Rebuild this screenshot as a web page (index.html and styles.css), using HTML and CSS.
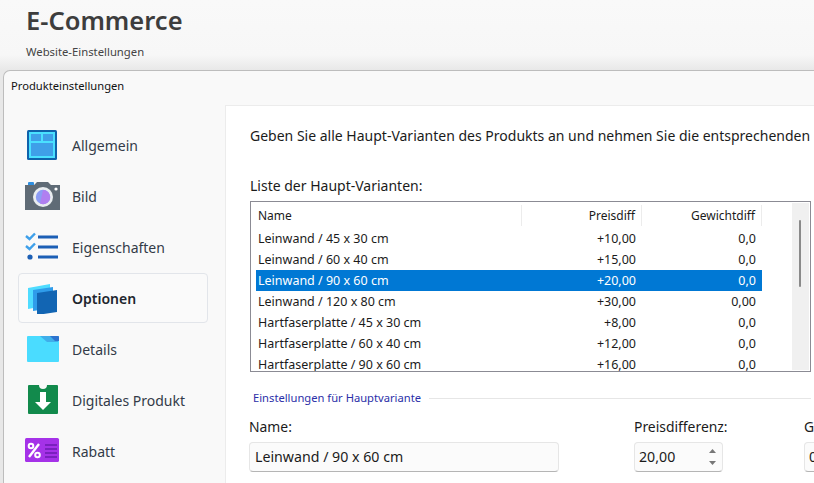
FILE: index.html
```html
<!DOCTYPE html>
<html lang="de">
<head>
<meta charset="utf-8">
<title>Produkteinstellungen</title>
<link rel="stylesheet" href="styles.css">
</head>
<body>
<header class="page-head">
  <h1 class="page-title">E-Commerce</h1>
  <p class="page-sub">Website-Einstellungen</p>
</header>
<section class="dialog">
  <div class="dialog-title">Produkteinstellungen</div>
  <div class="dialog-body">
    <nav class="nav">
      <a class="nav-item">
        <svg class="nav-icon" viewBox="0 0 35 32"><rect x="2" y="1" width="30" height="30" rx="1.500" fill="#0f62ab"/><rect x="4" y="3" width="26" height="26" fill="#4ae0ff"/><rect x="6" y="5" width="10" height="7" fill="#3f9fe8"/><rect x="18" y="5" width="10" height="7" fill="#3f9fe8"/><rect x="6" y="14" width="22" height="13" fill="#3f9fe8"/></svg>
        <span>Allgemein</span>
      </a>
      <a class="nav-item">
        <svg class="nav-icon" viewBox="0 0 35 32"><rect x="3" y="2" width="6" height="4" rx="1" fill="#2f8fe0"/><path d="M0 5h9l3-3h11l3 3h9v25H0z" fill="#5f6b76"/><circle cx="18" cy="17" r="10" fill="#e9edf0"/><circle cx="18" cy="17" r="7.200" fill="#8c9cf5"/><path d="M18 10a7.200 7.200 0 0 1 5 12.300a7.200 7.200 0 0 1-8 1.200z" fill="#b07ff0"/><circle cx="31" cy="9" r="1.600" fill="#fff"/></svg>
        <span>Bild</span>
      </a>
      <a class="nav-item">
        <svg class="nav-icon" viewBox="0 0 35 32"><path d="M1 5l3.500 3 5.500-5.500M1 15l3.500 3 5.500-5.500" fill="none" stroke="#3fa0ea" stroke-width="2.400"/><circle cx="5" cy="26" r="2.600" fill="#1c5fb5"/><path d="M13 6h20M13 16h20M13 26h20" stroke="#1c5fb5" stroke-width="3"/></svg>
        <span>Eigenschaften</span>
      </a>
      <a class="nav-item nav-item-active">
        <svg class="nav-icon" viewBox="0 0 35 32"><path d="M3 6l22-4v21L3 27z" fill="#4fdcff"/><path d="M8 8l20-3v21L8 29z" fill="#2f9cea"/><path d="M12 11l20-3v22l-20 3z" fill="#1265b3"/></svg>
        <span>Optionen</span>
      </a>
      <a class="nav-item">
        <svg class="nav-icon" viewBox="0 0 35 32"><path d="M2 4a1 1 0 0 1 1-1h30a1 1 0 0 1 1 1v24a1 1 0 0 1-1 1H3a1 1 0 0 1-1-1z" fill="#4adcff"/><path d="M15 3h14l4 5v1H22z" fill="#3faeea"/><path d="M25 3h8a1 1 0 0 1 1 1v4h-4z" fill="#2d74cf"/></svg>
        <span>Details</span>
      </a>
      <a class="nav-item">
        <svg class="nav-icon" viewBox="0 0 35 32"><path d="M4 1h10a4 4 0 0 0 8 0h10a1 1 0 0 1 1 1v27a1 1 0 0 1-1 1H4a1 1 0 0 1-1-1V2a1 1 0 0 1 1-1z" fill="#128a4c"/><path d="M15 8h6v10h5l-8 8-8-8h5z" fill="#fff"/></svg>
        <span>Digitales Produkt</span>
      </a>
      <a class="nav-item">
        <svg class="nav-icon" viewBox="0 0 35 32"><rect x="0" y="3" width="34" height="24" rx="1.500" fill="#a532e8"/><path d="M20 10h12M20 14h12M20 18h12M20 22h12" stroke="#6c1bb0" stroke-width="1.500"/><path d="M14 9L4 22" stroke="#fff" stroke-width="2.400"/><circle cx="6" cy="11" r="2.300" fill="none" stroke="#fff" stroke-width="2"/><circle cx="12.500" cy="20" r="2.300" fill="none" stroke="#fff" stroke-width="2"/></svg>
        <span>Rabatt</span>
      </a>
    </nav>
    <main class="content">
      <p class="intro">Geben Sie alle Haupt-Varianten des Produkts an und nehmen Sie die entsprechenden</p>
      <div class="list-label">Liste der Haupt-Varianten:</div>
      <div class="list">
        <div class="list-main">
          <div class="row row-head">
            <span class="c-name">Name</span><span class="c-num">Preisdiff</span><span class="c-num">Gewichtdiff</span>
          </div>
          <div class="row"><span class="c-name">Leinwand / 45 x 30 cm</span><span class="c-num">+10,00</span><span class="c-num">0,0</span></div>
          <div class="row"><span class="c-name">Leinwand / 60 x 40 cm</span><span class="c-num">+15,00</span><span class="c-num">0,0</span></div>
          <div class="row row-sel"><span class="c-name">Leinwand / 90 x 60 cm</span><span class="c-num">+20,00</span><span class="c-num">0,0</span></div>
          <div class="row"><span class="c-name">Leinwand / 120 x 80 cm</span><span class="c-num">+30,00</span><span class="c-num">0,00</span></div>
          <div class="row"><span class="c-name">Hartfaserplatte / 45 x 30 cm</span><span class="c-num">+8,00</span><span class="c-num">0,0</span></div>
          <div class="row"><span class="c-name">Hartfaserplatte / 60 x 40 cm</span><span class="c-num">+12,00</span><span class="c-num">0,0</span></div>
          <div class="row"><span class="c-name">Hartfaserplatte / 90 x 60 cm</span><span class="c-num">+16,00</span><span class="c-num">0,0</span></div>
        </div>
        <div class="scrollbar"><div class="thumb"></div></div>
      </div>
      <div class="group-head"><span class="group-title">Einstellungen für Hauptvariante</span><span class="group-line"></span></div>
      <div class="fields">
        <div class="field field-name">
          <label class="field-label">Name:</label>
          <div class="input">Leinwand / 90 x 60 cm</div>
        </div>
        <div class="field field-price">
          <label class="field-label">Preisdifferenz:</label>
          <div class="input input-spin">20,00
            <svg class="spin" viewBox="0 0 7 16"><path d="M3.500 0L7 4H0zM0 12h7l-3.500 4z" fill="#777"/></svg>
          </div>
        </div>
        <div class="field field-weight">
          <label class="field-label">G</label>
          <div class="input input-spin">0</div>
        </div>
      </div>
    </main>
  </div>
</section>
</body>
</html>
```
FILE: styles.css
```css
* { box-sizing: border-box; }
html, body { height: 100%; }
body {
  margin: 0;
  width: 814px;
  height: 483px;
  overflow: hidden;
  background: linear-gradient(#f9f9f9 0, #f7f7f7 55px, #e8e8e8 70px);
  font-family: "Noto Sans", "Open Sans", sans-serif;
  color: #1b1b1b;
}
.page-head { height: 70px; padding: 4px 0 0 26px; }
.page-title {
  margin: 0;
  font-size: 25.500px;
  line-height: 32px;
  font-weight: 600;
  color: #3d3d3d;
}
.page-sub {
  margin: 8px 0 0;
  font-size: 11.300px;
  line-height: 16px;
  color: #444;
}
.dialog {
  margin-left: 3px;
  width: 811px;
  height: 413px;
  display: flex;
  flex-direction: column;
  background: #f9f9f9;
  border: 1px solid #bdbdbd;
  border-right: 0;
  border-bottom: 0;
  border-radius: 7px 0 0 0;
}
.dialog-title {
  height: 34px;
  padding: 6px 0 0 7px;
  font-size: 11.200px;
  line-height: 18px;
  color: #111;
}
.dialog-body { flex: 1; display: flex; min-height: 0; }
.nav {
  width: 221px;
  flex: none;
  padding: 15px 17px 0 14px;
  display: flex;
  flex-direction: column;
  gap: 1px;
}
.nav-item {
  height: 50px;
  flex: none;
  display: flex;
  align-items: center;
  gap: 12px;
  padding-left: 6px;
  font-size: 14px;
  color: #333b48;
  border: 1px solid transparent;
  border-radius: 4px;
}
.nav-item-active {
  border-color: #e2e5ea;
  font-weight: 600;
  background: #fafafa;
  color: #20252d;
}
.nav-icon { width: 35px; height: 32px; flex: none; }
.content {
  flex: 1;
  min-width: 0;
  background: #fff;
  border-top: 1px solid #ececec;
  border-left: 1px solid #ececec;
  padding: 20px 3px 0 23px;
  overflow: hidden;
}
.intro {
  margin: 0 0 0 1px;
  font-size: 14px;
  line-height: 20px;
  white-space: nowrap;
}
.list-label { margin: 30px 0 0 1px; font-size: 14px; line-height: 20px; }
.list {
  margin: 5px 0 0 1px;
  height: 171px;
  display: flex;
  border: 1px solid #8b8b94;
  overflow: hidden;
}
.list-main { flex: 1; padding: 2px 0 0 5px; min-width: 0; }
.row {
  width: 506px;
  height: 21px;
  display: flex;
  align-items: center;
  font-size: 12.500px;
  line-height: 21px;
}
.row-head { height: 23px; margin-bottom: 1px; color: #1b1b1b; font-size: 12px; }
.row-head span { border-right: 1px solid #ececec; }
.row-sel { background: #0078d4; color: #fff; }
.c-name { width: 266px; padding-left: 2px; }
.c-num { width: 120px; padding-right: 6px; text-align: right; }
.scrollbar {
  width: 17px;
  margin: 1px 1px 1px 0;
  background: #f0f0f0;
  padding: 17px 0 0 7px;
}
.thumb { width: 2px; height: 67px; background: #8a8a8a; border-radius: 1px; }
.group-head {
  margin-top: 18px;
  display: flex;
  align-items: center;
  gap: 8px;
  padding-left: 4px;
}
.group-title { font-size: 11.200px; line-height: 16px; color: #2b2fa8; white-space: nowrap; }
.group-line { flex: 1; height: 1px; background: #e6e6e6; }
.fields { display: flex; margin-top: 11px; }
.field { flex: none; }
.field-name { width: 385px; }
.field-price { width: 170px; }
.field-label { display: block; font-size: 13.900px; line-height: 20px; white-space: nowrap; }
.input {
  margin-top: 5px;
  height: 30px;
  display: flex;
  align-items: center;
  justify-content: space-between;
  padding: 0 5px 2px;
  font-size: 14.200px;
  background: #fbfbfb;
  border: 1px solid #e6e6e6;
  border-bottom-color: #b5b5b5;
  border-radius: 4px;
}
.input-spin { padding-left: 4px; }
.field-name .input { width: 310px; }
.field-price .input { width: 89px; }
.field-weight .input { width: 89px; }
.spin { width: 7px; height: 16px; margin: 2px 1px 0 0; }
```
